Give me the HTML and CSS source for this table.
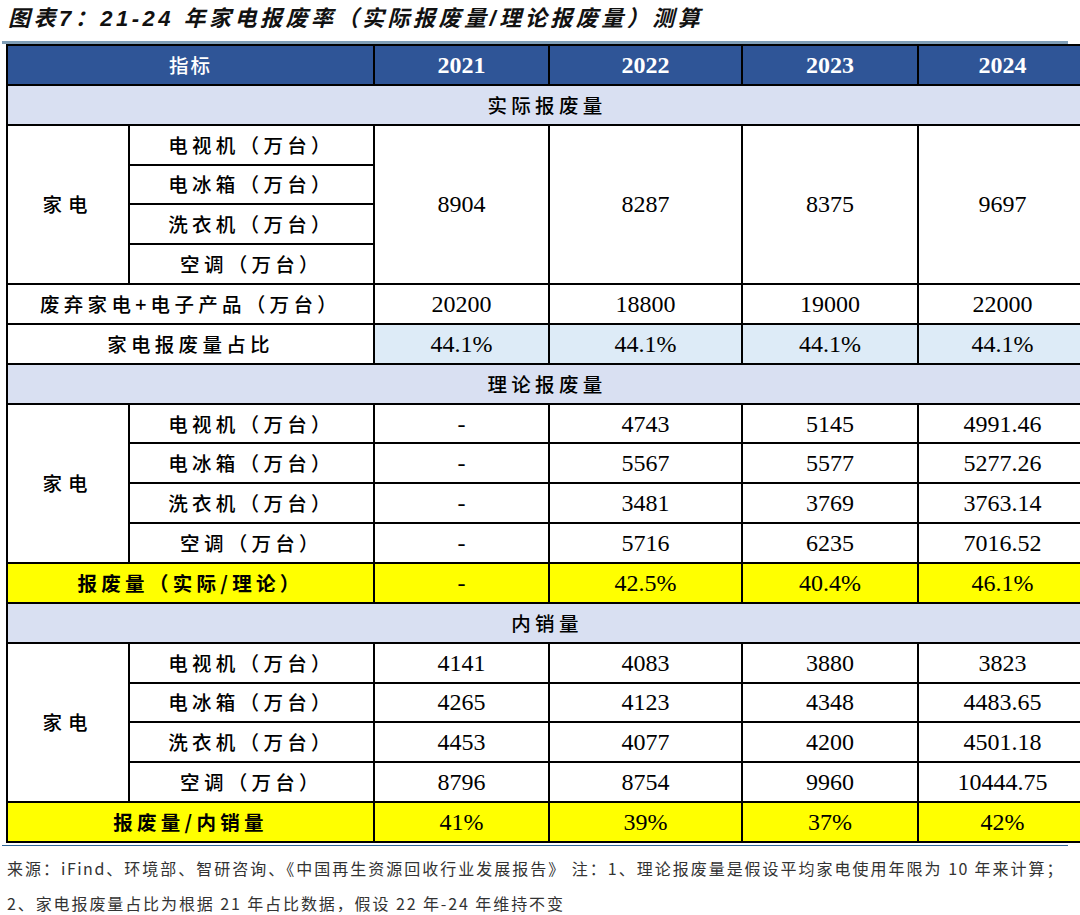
FILE: index.html
```html
<!DOCTYPE html>
<html lang="zh-CN">
<head>
<meta charset="utf-8">
<title>图表7</title>
<link rel="stylesheet" href="styles.css">
</head>
<body>
<div class="title">图表7：21-24 年家电报废率（实际报废量/理论报废量）测算</div>
<div class="rule-top"></div>
<table class="data">
  <colgroup>
    <col class="c1"><col class="c2"><col class="c3"><col class="c4"><col class="c5"><col class="c6">
  </colgroup>
  <tr class="head">
    <th colspan="2" class="lbl">指标</th><th>2021</th><th>2022</th><th>2023</th><th>2024</th>
  </tr>
  <tr class="sub"><td colspan="6" class="lbl">实际报废量</td></tr>
  <tr>
    <td rowspan="4" class="lbl wide">家电</td><td class="lbl">电视机（万台）</td>
    <td rowspan="4">8904</td><td rowspan="4">8287</td><td rowspan="4">8375</td><td rowspan="4">9697</td>
  </tr>
  <tr><td class="lbl">电冰箱（万台）</td></tr>
  <tr><td class="lbl">洗衣机（万台）</td></tr>
  <tr><td class="lbl">空调（万台）</td></tr>
  <tr>
    <td colspan="2" class="lbl">废弃家电+电子产品（万台）</td><td>20200</td><td>18800</td><td>19000</td><td>22000</td>
  </tr>
  <tr class="ratio">
    <td colspan="2" class="lbl">家电报废量占比</td><td>44.1%</td><td>44.1%</td><td>44.1%</td><td>44.1%</td>
  </tr>
  <tr class="sub"><td colspan="6" class="lbl">理论报废量</td></tr>
  <tr>
    <td rowspan="4" class="lbl wide">家电</td><td class="lbl">电视机（万台）</td>
    <td>-</td><td>4743</td><td>5145</td><td>4991.46</td>
  </tr>
  <tr><td class="lbl">电冰箱（万台）</td><td>-</td><td>5567</td><td>5577</td><td>5277.26</td></tr>
  <tr><td class="lbl">洗衣机（万台）</td><td>-</td><td>3481</td><td>3769</td><td>3763.14</td></tr>
  <tr><td class="lbl">空调（万台）</td><td>-</td><td>5716</td><td>6235</td><td>7016.52</td></tr>
  <tr class="hl">
    <td colspan="2" class="lbl strong">报废量（实际/理论）</td><td>-</td><td>42.5%</td><td>40.4%</td><td>46.1%</td>
  </tr>
  <tr class="sub"><td colspan="6" class="lbl">内销量</td></tr>
  <tr>
    <td rowspan="4" class="lbl wide">家电</td><td class="lbl">电视机（万台）</td>
    <td>4141</td><td>4083</td><td>3880</td><td>3823</td>
  </tr>
  <tr><td class="lbl">电冰箱（万台）</td><td>4265</td><td>4123</td><td>4348</td><td>4483.65</td></tr>
  <tr><td class="lbl">洗衣机（万台）</td><td>4453</td><td>4077</td><td>4200</td><td>4501.18</td></tr>
  <tr><td class="lbl">空调（万台）</td><td>8796</td><td>8754</td><td>9960</td><td>10444.75</td></tr>
  <tr class="hl">
    <td colspan="2" class="lbl strong">报废量/内销量</td><td>41%</td><td>39%</td><td>37%</td><td>42%</td>
  </tr>
</table>
<div class="rule-bottom"></div>
<p class="note first">来源：iFind、环境部、智研咨询、《中国再生资源回收行业发展报告》 注：1、理论报废量是假设平均家电使用年限为 10 年来计算；</p>
<p class="note last">2、家电报废量占比为根据 21 年占比数据，假设 22 年-24 年维持不变</p>
</body>
</html>
```

FILE: styles.css
```css
html, body {
  margin: 0;
  padding: 0;
  overflow: hidden;
  background: #ffffff;
}

body {
  width: 1080px;
  height: 915px;
  font-family: "Noto Sans CJK SC", sans-serif;
  color: #000;
}

.title {
  height: 41px;
  line-height: 38px;
  padding-left: 8px;
  font-family: "Liberation Sans", "Noto Sans CJK SC", sans-serif;
  font-size: 22px;
  font-weight: 700;
  font-style: italic;
  letter-spacing: 3.5px;
  white-space: nowrap;
  color: #111;
}

.rule-top {
  width: 1066px;
  margin-left: 2px;
  height: 3px;
  background: #7f9eb7;
}

.data {
  border-collapse: collapse;
  table-layout: fixed;
  width: 1080px;
  margin-left: 6px;
  font-family: "Liberation Serif", "Noto Sans CJK SC", serif;
  font-size: 24px;
}

.c1 { width: 122px; }
.c2 { width: 245px; }
.c3 { width: 175px; }
.c4 { width: 193px; }
.c5 { width: 176px; }
.c6 { width: 169px; }

.data tr {
  height: 39.85px;
}

.data th,
.data td {
  border: 2px solid #000;
  padding: 0;
  text-align: center;
  vertical-align: middle;
  line-height: 24px;
  white-space: nowrap;
  overflow: hidden;
}

.data .lbl {
  font-family: "Noto Sans CJK SC", sans-serif;
  font-size: 19.5px;
  letter-spacing: 4.3px;
  font-weight: 500;
}

.data .wide {
  letter-spacing: 6px;
}

.data .strong {
  font-weight: 700;
}

.head th {
  background: #2f5597;
  color: #fff;
  font-weight: 700;
}

.head th.lbl {
  font-weight: 500;
  letter-spacing: 2px;
}

.sub td {
  background: #d9e0f2;
}

.ratio td + td {
  background: #ddebf7;
}

.hl td {
  background: #ffff00;
}

.rule-bottom {
  width: 1066px;
  margin-left: 2px;
  margin-top: 2px;
  height: 1px;
  background: #2d6496;
}

.note {
  margin: 0;
  padding-left: 7px;
  font-size: 16px;
  letter-spacing: 1.9px;
  color: #333;
  white-space: nowrap;
}

.note.first {
  height: 40px;
  line-height: 44px;
  width: 1057px;
  letter-spacing: 1.5px;
  text-align: justify;
  text-align-last: justify;
}

.note.last {
  height: 28px;
  line-height: 34px;
}
```
